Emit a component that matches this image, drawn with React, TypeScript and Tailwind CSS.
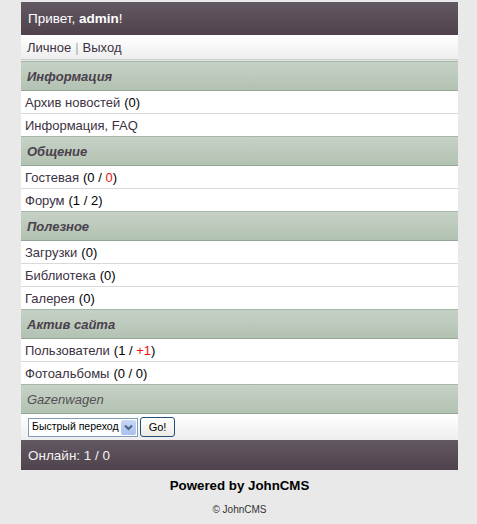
const font = { fontFamily: '"Liberation Sans", Arial, sans-serif' };

type Part = { text: string; red?: boolean };

const sections: { title: string; rows: { label: string; count?: Part[] }[] }[] = [
  {
    title: "Информация",
    rows: [
      { label: "Архив новостей", count: [{ text: "0" }] },
      { label: "Информация, FAQ" },
    ],
  },
  {
    title: "Общение",
    rows: [
      { label: "Гостевая", count: [{ text: "0 / " }, { text: "0", red: true }] },
      { label: "Форум", count: [{ text: "1 / 2" }] },
    ],
  },
  {
    title: "Полезное",
    rows: [
      { label: "Загрузки", count: [{ text: "0" }] },
      { label: "Библиотека", count: [{ text: "0" }] },
      { label: "Галерея", count: [{ text: "0" }] },
    ],
  },
  {
    title: "Актив сайта",
    rows: [
      { label: "Пользователи", count: [{ text: "1 / " }, { text: "+1", red: true }] },
      { label: "Фотоальбомы", count: [{ text: "0 / 0" }] },
    ],
  },
];

function SectionHeader({ title, plain }: { title: string; plain?: boolean }) {
  return (
    <div className="h-[30px] flex items-center pl-[6px] pt-[2px] border-t border-b border-t-[#a7b7a7] border-b-[#96a696] bg-gradient-to-b from-[#c6d1c6] to-[#b2c2b2]">
      <span className={`italic text-[13px] ${plain ? "font-normal text-[#555055]" : "font-bold text-[#4a3f4c]"}`}>
        {title}
      </span>
    </div>
  );
}

export default function App() {
  return (
    <div className="min-h-[524px] bg-[#e9e9e9] pt-[2px]" style={font}>
      <div className="ml-[21px] w-[437px]">
        {/* Header */}
        <div className="h-[33px] flex items-center pl-[7px] pt-[2px] bg-gradient-to-b from-[#635962] to-[#4f424c] text-white text-[13.5px]">
          <span>
            Привет, <b>admin</b>!
          </span>
        </div>

        {/* User links */}
        <div className="h-[25px] flex items-center pl-[6px] pt-[2px] bg-gradient-to-b from-white to-[#eeeeee] border-b border-[#cccccc] text-[13px] text-[#3c3242]">
          <span>Личное</span>
          <span className="text-[#aaaaaa] mx-[4px]">|</span>
          <span>Выход</span>
        </div>
        <div className="h-px bg-[#e4e4e4]" />

        {sections.map((s) => (
          <div key={s.title}>
            <SectionHeader title={s.title} />
            {s.rows.map((r, i) => (
              <div
                key={r.label}
                className={`flex items-center pl-[4px] pt-[2px] bg-white text-[13px] text-[#3c3242] ${
                  i < s.rows.length - 1 ? "h-[23px] border-b border-[#d9d9d9]" : "h-[22px]"
                }`}
              >
                <span>{r.label}</span>
                {r.count && (
                  <span className="text-black ml-[4px]">
                    (
                    {r.count.map((p, j) => (
                      <span key={j} className={p.red ? "text-[#ee1111]" : ""}>
                        {p.text}
                      </span>
                    ))}
                    )
                  </span>
                )}
              </div>
            ))}
          </div>
        ))}

        <SectionHeader title="Gazenwagen" plain />

        {/* Quick jump */}
        <div className="h-[26px] flex items-center pl-[7px] gap-[2px] bg-gradient-to-b from-white to-[#eeeeee]">
          <div className="h-[19px] w-[110px] flex items-center border border-[#7f9db9] bg-white pl-[3px] pr-px text-[10.5px] text-black whitespace-nowrap">
            <span className="flex-1 overflow-hidden">Быстрый переход</span>
            <span className="shrink-0 w-[15px] h-[15px] rounded-[2px] bg-gradient-to-b from-[#c8d8f8] to-[#a8c0ec] flex items-center justify-center">
              <svg width="9" height="7" viewBox="0 0 9 7">
                <path d="M1 1.5 L4.5 5 L8 1.5" fill="none" stroke="#4d6185" strokeWidth="2" />
              </svg>
            </span>
          </div>
          <button className="h-[20px] w-[35px] rounded-[3px] border border-[#244f7a] bg-gradient-to-b from-white to-[#ecebe4] text-[11px] text-black flex items-center justify-center">
            Go!
          </button>
        </div>

        {/* Online */}
        <div className="h-[30px] flex items-center pl-[7px] pt-[2px] bg-gradient-to-b from-[#635962] to-[#4f424c] text-[#f2f2f2] text-[13.5px]">
          Онлайн: 1 / 0
        </div>

        {/* Footer */}
        <div className="text-center pt-[7px]">
          <div className="text-[13.3px] font-bold text-black leading-[17px]">Powered by JohnCMS</div>
          <div className="text-[10px] text-[#333333] mt-[8px]">© JohnCMS</div>
        </div>
      </div>
    </div>
  );
}
